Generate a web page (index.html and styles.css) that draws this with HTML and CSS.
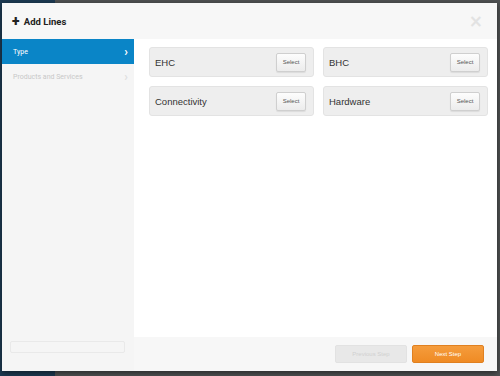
FILE: index.html
```html
<!DOCTYPE html>
<html lang="en">
<head>
    <meta charset="UTF-8">
    <meta name="viewport" content="width=device-width, initial-scale=1.0">
    <title>Add Lines</title>
    <link rel="stylesheet" href="styles.css">
</head>
<body>

<div class="modal">
    <div class="modal-header">
        <h3><span class="plus">+</span> Add Lines</h3>
        <span class="close">&times;</span>
    </div>

    <div class="modal-body">
        <div class="sidebar">
            <ul class="steps">
                <li class="active">Type <span class="chev">&#x203A;</span></li>
                <li>Products and Services <span class="chev">&#x203A;</span></li>
            </ul>
            <div class="sidebar-box"></div>
        </div>

        <div class="main">
            <div class="content">
                <div class="card">
                    <span>EHC</span>
                    <button class="btn-select">Select</button>
                </div>
                <div class="card">
                    <span>BHC</span>
                    <button class="btn-select">Select</button>
                </div>
                <div class="card">
                    <span>Connectivity</span>
                    <button class="btn-select">Select</button>
                </div>
                <div class="card">
                    <span>Hardware</span>
                    <button class="btn-select">Select</button>
                </div>
            </div>
            <div class="footer">
                <button class="btn btn-prev" disabled>Previous Step</button>
                <button class="btn btn-next">Next Step</button>
            </div>
        </div>
    </div>
</div>

</body>
</html>
```

FILE: styles.css
```css
html, body {
    margin: 0;
    height: 100%;
}
body {
    background: linear-gradient(to right, #1d3a52 55px, #4f5152 55px);
    font-family: "Liberation Sans", Arial, sans-serif;
    overflow: hidden;
}
.modal {
    margin: 3px 3px 0 2px;
    height: 368px;
    display: flex;
    flex-direction: column;
    background: #f5f5f5;
    box-shadow: 0 2px 6px rgba(0, 0, 0, 0.5);
}
.modal-header {
    height: 36px;
    display: flex;
    align-items: center;
    justify-content: space-between;
    padding: 0 14px 0 10px;
    background: #f7f7f7;
}
.modal-header h3 {
    margin: 0;
    font-family: Roboto, sans-serif;
    font-size: 9.5px;
    font-weight: bold;
    color: #222;
}
.plus {
    font-size: 14px;
    font-weight: 900;
    margin-right: 2px;
    vertical-align: -1px;
}
.close {
    font-family: "DejaVu Sans", sans-serif;
    font-size: 17px;
    font-weight: bold;
    color: #e2e2e2;
}
.modal-body {
    flex: 1;
    display: flex;
}
.sidebar {
    width: 132px;
    display: flex;
    flex-direction: column;
    justify-content: space-between;
    background: #f5f5f5;
}
.steps {
    list-style: none;
    margin: 0;
    padding: 0;
}
.steps li {
    height: 25px;
    display: flex;
    align-items: center;
    justify-content: space-between;
    padding: 0 6px 0 11px;
    font-family: Roboto, sans-serif;
    font-size: 7px;
    color: #c8c8c8;
}
.steps li.active {
    background: #0a85c7;
    color: #fff;
}
.chev {
    font-size: 12px;
    font-weight: bold;
    color: #e0e0e0;
}
.active .chev {
    color: #fff;
}
.sidebar-box {
    margin: 0 9px 18px 8px;
    height: 10px;
    border: 1px solid #e9e9e9;
    border-radius: 2px;
}
.main {
    flex: 1;
    display: flex;
    flex-direction: column;
}
.content {
    flex: 1;
    background: #fff;
    padding: 8px 9px 0 15px;
    display: grid;
    grid-template-columns: 1fr 1fr;
    grid-auto-rows: 30px;
    gap: 9px;
    align-content: start;
}
.card {
    display: flex;
    align-items: center;
    justify-content: space-between;
    padding: 0 7px 0 5px;
    background: #eeeeee;
    border: 1px solid #e3e3e3;
    border-radius: 3px;
    font-size: 9.5px;
    color: #333;
}
.btn-select {
    width: 30px;
    height: 19px;
    padding: 0;
    font-family: "Liberation Sans", Arial, sans-serif;
    font-size: 6px;
    color: #555;
    background: linear-gradient(#fdfdfd, #ececec);
    border: 1px solid #cfcfcf;
    border-radius: 2px;
    box-shadow: 0 1px 1px rgba(0, 0, 0, 0.08);
}
.footer {
    height: 34px;
    display: flex;
    align-items: center;
    justify-content: flex-end;
    gap: 5px;
    padding-right: 13px;
    background: #f7f7f7;
}
.btn {
    width: 72px;
    height: 18px;
    padding: 0;
    font-family: "Liberation Sans", Arial, sans-serif;
    font-size: 6px;
    border-radius: 2px;
    border: 1px solid transparent;
}
.btn-prev {
    background: #e8e8e8;
    border-color: #e2e2e2;
    color: #d0d0d0;
}
.btn-next {
    background: linear-gradient(#f59c3c, #ef8b24);
    border-color: #e08020;
    color: #fff;
}
```
